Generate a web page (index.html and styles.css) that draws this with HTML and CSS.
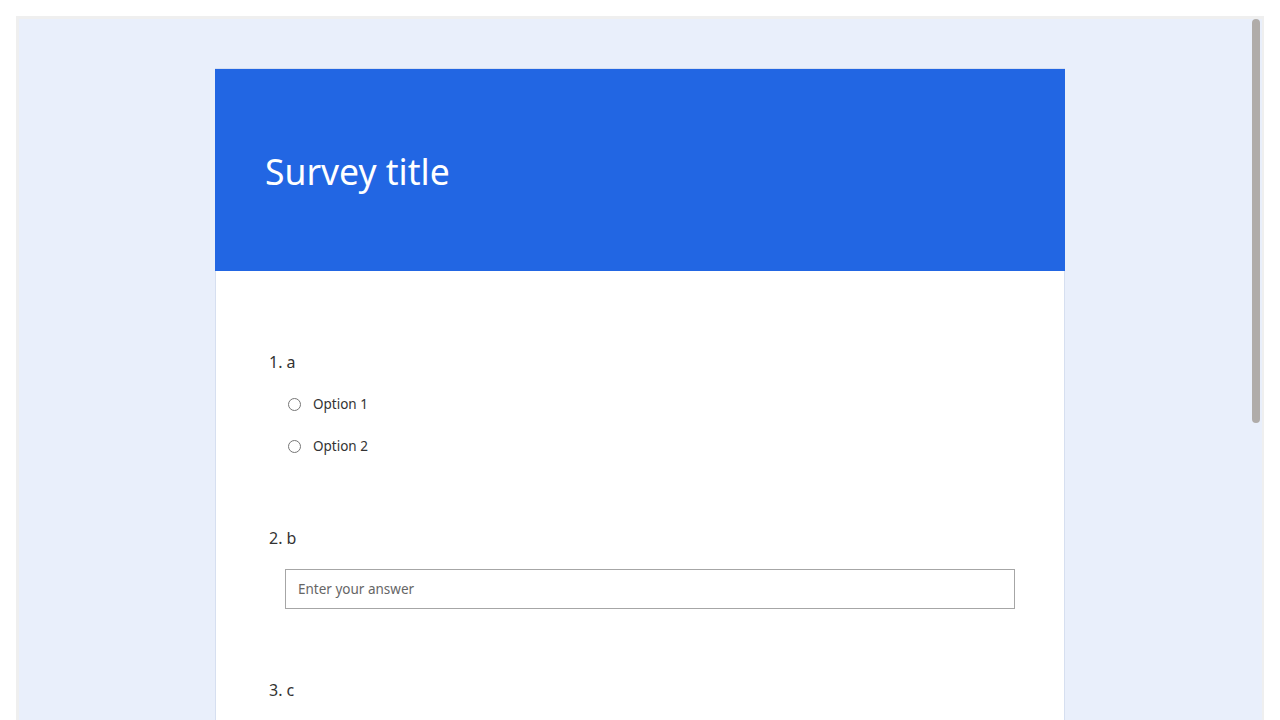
FILE: index.html
```html
<!DOCTYPE html>
<html lang="en">
<head>
<meta charset="utf-8">
<title>Survey</title>
<link rel="stylesheet" href="styles.css">
</head>
<body>
<div class="frame">
  <div class="card">
    <div class="card-header">
      <h1 class="survey-title">Survey title</h1>
    </div>
    <div class="card-body">
      <div class="question">
        <div class="q-title">1. a</div>
        <div class="options">
          <label class="option"><input type="radio" name="q1"><span>Option 1</span></label>
          <label class="option"><input type="radio" name="q1"><span>Option 2</span></label>
        </div>
      </div>
      <div class="question">
        <div class="q-title">2. b</div>
        <div class="answer">
          <input class="text-input" type="text" placeholder="Enter your answer">
        </div>
      </div>
      <div class="question">
        <div class="q-title">3. c</div>
      </div>
    </div>
  </div>
  <div class="scrollbar"><div class="thumb"></div></div>
</div>
</body>
</html>
```
FILE: styles.css
```css
html {
  overflow: hidden;
}
body {
  margin: 16px 16px 0 16px;
  background: #ffffff;
  font-family: "Noto Sans", "Open Sans", sans-serif;
  color: #333333;
}
.frame {
  position: relative;
  box-sizing: border-box;
  width: 1248px;
  height: 760px;
  border-top: 3px solid #efefef;
  border-left: 3px solid #efefef;
  border-right: 2px solid #efefef;
  background: #e9effb;
  overflow: hidden;
  padding-top: 49px;
}
.card {
  width: 850px;
  margin: 0 0 0 196px;
  box-sizing: border-box;
  border: 1px solid #d6dff0;
  background: #ffffff;
  min-height: 900px;
}
.card-header {
  background: #2266e3;
  height: 202px;
  margin: 0 -1px;
  box-sizing: border-box;
  padding: 0 50px;
  display: flex;
  align-items: flex-start;
}
.survey-title {
  margin: 78px 0 0 0;
  font-weight: 400;
  font-size: 35.5px;
  line-height: 48px;
  color: #ffffff;
}
.card-body {
  padding: 80px 49px 0 49px;
}
.question + .question {
  margin-top: 60px;
}
.q-title {
  font-size: 16px;
  line-height: 22px;
  padding-left: 4px;
}
.options {
  margin-top: 10px;
  padding-left: 20px;
}
.option {
  display: flex;
  align-items: center;
  height: 42px;
  font-size: 13.5px;
}
.option input {
  margin: 0 12px 0 3px;
  width: 13px;
  height: 13px;
}
.answer {
  margin-top: 20px;
  padding-left: 20px;
  padding-bottom: 10px;
}
.text-input {
  display: block;
  box-sizing: border-box;
  width: 730px;
  height: 40px;
  border: 1px solid #a6a6a6;
  border-radius: 0;
  padding: 0 12px;
  font-family: inherit;
  font-size: 13.5px;
  color: #333333;
  outline: none;
}
.text-input::placeholder {
  color: #666666;
}
.scrollbar {
  position: absolute;
  top: 0;
  right: 1px;
  width: 10px;
  height: 100%;
}
.thumb {
  margin: 0 auto;
  width: 8px;
  height: 404px;
  border-radius: 4px;
  background: #b0aca9;
}
```
